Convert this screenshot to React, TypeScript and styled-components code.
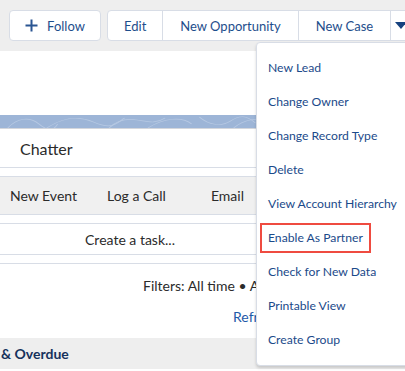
import { FunctionComponent } from "react";
import styled, { createGlobalStyle, css } from "styled-components";

const GlobalStyle = createGlobalStyle`
  html, body {
    margin: 0;
    padding: 0;
    background: #ffffff;
  }
  body {
    font-family: Lato, "Open Sans", "Liberation Sans", sans-serif;
    -webkit-font-smoothing: antialiased;
  }
`;

const menuItems = [
  "New Lead",
  "Change Owner",
  "Change Record Type",
  "Delete",
  "View Account Hierarchy",
  "Enable As Partner",
  "Check for New Data",
  "Printable View",
  "Create Group",
];

const App: FunctionComponent = () => {
  return (
    <>
      <GlobalStyle />
      <Page>
        <Header>
          <Button>
            <PlusIcon />
            Follow
          </Button>
          <ButtonGroup>
            <GroupButton>Edit</GroupButton>
            <GroupButton>New Opportunity</GroupButton>
            <GroupButton>New Case</GroupButton>
            <GroupButton narrow>
              <CaretIcon />
            </GroupButton>
          </ButtonGroup>
        </Header>

        <Card>
          <Blank />
          <Banner>
            <BannerPattern />
          </Banner>
          <TabHeader>Chatter</TabHeader>
          <Gap />
          <PublisherTabs>
            <PublisherTab>New Event</PublisherTab>
            <PublisherTab>Log a Call</PublisherTab>
            <PublisherTab>Email</PublisherTab>
          </PublisherTabs>
          <Gap />
          <Composer>Create a task...</Composer>
          <Gap />
          <Filters>Filters: All time • All activities • All types</Filters>
          <Links>Refresh • Expand All • View All</Links>
          <SectionBar>&amp; Overdue</SectionBar>
        </Card>

        <Menu>
          {menuItems.map((item) => (
            <MenuItem key={item}>
              <MenuLabel highlighted={item === "Enable As Partner"}>{item}</MenuLabel>
            </MenuItem>
          ))}
        </Menu>
      </Page>
    </>
  );
};

export default App;

const PlusIcon = () => (
  <svg width="13" height="13" viewBox="0 0 13 13" style={{ marginRight: 9 }}>
    <path d="M6.5 0.5v12M0.5 6.5h12" stroke="#2a5592" strokeWidth="2" fill="none" />
  </svg>
);

const CaretIcon = () => (
  <svg width="12" height="7" viewBox="0 0 12 7">
    <path d="M0 0h12L6 7z" fill="#16427f" />
  </svg>
);

const BannerPattern = () => (
  <svg width="100%" height="13" viewBox="0 0 260 13" preserveAspectRatio="none">
    <g stroke="#b7c9e3" strokeWidth="0.7" fill="none">
      <path d="M5 13c6-10 14-12 20-4s10 6 12 0" />
      <path d="M30 13c8-8 18-14 30-6s14 2 20-4" />
      <path d="M70 13c4-6 10-10 18-8s12 4 18-2" />
      <path d="M95 13c10-10 22-12 28-4" />
      <path d="M128 2c6 8 14 10 20 4s10-6 16 2" />
      <path d="M150 13c6-8 16-12 24-6" />
      <path d="M172 13c6-8 12-12 22-10s10 6 16 2" />
      <path d="M204 13l6-12M208 13l6-12M212 13l6-12M216 13l6-12" />
      <path d="M225 13c6-6 12-10 20-8s10 4 14 0" />
    </g>
  </svg>
);

const Page = styled.div`
  position: relative;
  width: 405px;
  height: 371px;
  overflow: hidden;
  background: #ffffff;
`;

const Header = styled.div`
  display: flex;
  align-items: flex-start;
  gap: 6px;
  height: 51px;
  box-sizing: border-box;
  padding: 10px 0 0 9px;
  background: #eeeeee;
`;

const buttonText = css`
  font-family: Lato, "Open Sans", "Liberation Sans", sans-serif;
  font-size: 13px;
  color: #1e4e8c;
  white-space: nowrap;
`;

const Button = styled.div`
  ${buttonText};
  display: flex;
  align-items: center;
  justify-content: center;
  flex-shrink: 0;
  width: 92px;
  height: 31px;
  box-sizing: border-box;
  background: #ffffff;
  border: 1px solid #d8dde6;
  border-radius: 4px;
`;

const ButtonGroup = styled.div`
  display: flex;
  flex-shrink: 0;
  height: 31px;
  box-sizing: border-box;
  background: #ffffff;
  border: 1px solid #d8dde6;
  border-radius: 4px;
`;

const GroupButton = styled.div<{ narrow?: boolean }>`
  ${buttonText};
  display: flex;
  align-items: center;
  justify-content: center;
  padding: ${({ narrow }) => (narrow ? "0 10px 0 3px" : "0 17px")};
  border-left: 1px solid #d8dde6;
  ${({ narrow }) =>
    narrow &&
    css`
      padding-left: 3px;
      & > svg {
        margin-left: 0;
      }
    `};
  &:first-child {
    border-left: none;
    padding: 0 16px 0 16px;
  }
  &:last-child {
    padding: 0 10px 0 4px;
  }
`;

const Card = styled.div`
  display: flex;
  flex-direction: column;
  background: #ffffff;
`;

const Blank = styled.div`
  height: 64px;
`;

const Banner = styled.div`
  height: 13px;
  background: #9db5d7;
  border-bottom: 1px solid #d3d6dc;
  overflow: hidden;
  line-height: 0;
`;

const TabHeader = styled.div`
  display: flex;
  align-items: center;
  height: 38px;
  padding-left: 20px;
  font-size: 16px;
  color: #2b2b2b;
  border-bottom: 1px solid #d8dde6;
`;

const Gap = styled.div`
  height: 8px;
  border-bottom: 1px solid #d8dde6;
`;

const PublisherTabs = styled.div`
  display: flex;
  align-items: center;
  gap: 30px;
  height: 37px;
  padding-left: 10px;
  background: #f0f0f0;
  border-bottom: 1px solid #d8dde6;
`;

const PublisherTab = styled.div`
  font-size: 14px;
  color: #2b2b2b;
  white-space: nowrap;
  &:last-child {
    margin-left: 15px;
  }
`;

const Composer = styled.div`
  display: flex;
  align-items: center;
  justify-content: center;
  width: 260px;
  height: 30px;
  font-size: 14px;
  color: #2b2b2b;
  border-bottom: 1px solid #d8dde6;
`;

const Filters = styled.div`
  padding: 13px 0 0 143px;
  height: 32px;
  box-sizing: border-box;
  font-size: 14px;
  color: #2b2b2b;
  white-space: nowrap;
`;

const Links = styled.div`
  padding: 12px 0 0 233px;
  height: 42px;
  box-sizing: border-box;
  font-size: 14px;
  color: #1e5aa8;
  white-space: nowrap;
`;

const SectionBar = styled.div`
  display: flex;
  align-items: center;
  height: 31px;
  padding-left: 1px;
  background: #eeeeee;
  font-size: 14px;
  font-weight: 700;
  color: #16325c;
`;

const Menu = styled.div`
  position: absolute;
  top: 42px;
  left: 256px;
  width: 160px;
  box-sizing: border-box;
  padding: 8px 0 8px;
  background: #ffffff;
  border: 1px solid #d8dde6;
  border-radius: 4px;
  box-shadow: 0 2px 3px rgba(0, 0, 0, 0.16);
`;

const MenuItem = styled.div`
  display: flex;
  align-items: center;
  height: 34px;
  padding-left: 11px;
`;

const MenuLabel = styled.span<{ highlighted?: boolean }>`
  font-size: 12.2px;
  line-height: 16px;
  color: #1b4a8a;
  white-space: nowrap;
  ${({ highlighted }) =>
    highlighted &&
    css`
      margin-left: -8px;
      padding: 5px 6px;
      border: 2px solid #ef4b40;
    `};
`;
